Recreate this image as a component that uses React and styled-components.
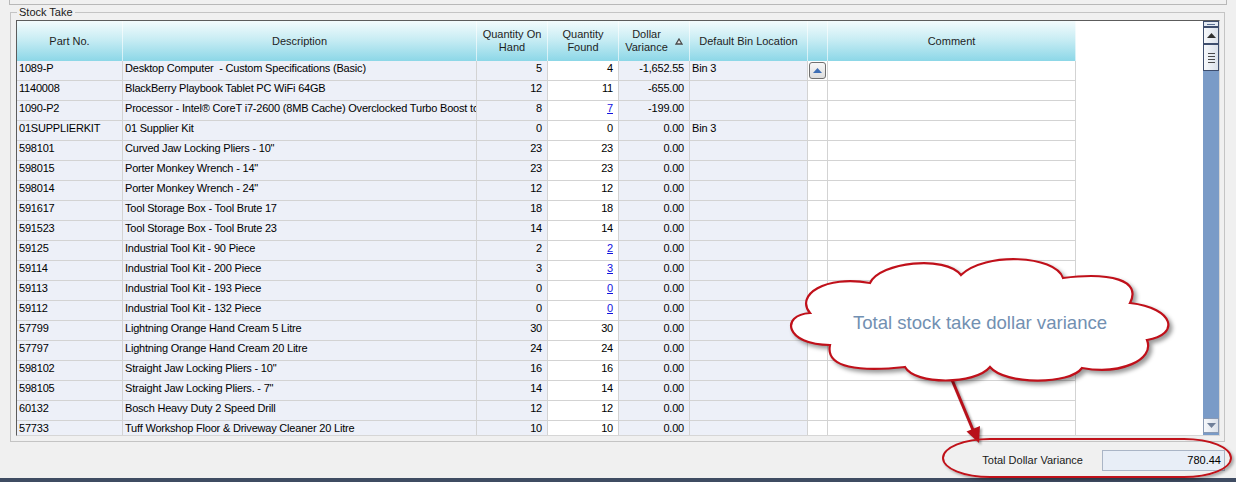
import React from 'react';
import styled, {createGlobalStyle} from 'styled-components';

const GlobalStyle = createGlobalStyle`
  html, body {
    margin: 0;
    padding: 0;
    background: #f0f0f0;
  }
`;

const Page = styled.div`
  position: relative;
  width: 1236px;
  height: 482px;
  overflow: hidden;
  background: #f0f0f0;
  display: flex;
  flex-direction: column;
  font: 11px "Liberation Sans", Arial, sans-serif;
  color: #000;
`;

const TopPanel = styled.div`
  box-sizing: border-box;
  height: 5px;
  margin: 0 9px;
  border: 1px solid #b8b8b8;
  border-top: none;
`;

const GroupBox = styled.fieldset`
  margin: 1px 11px 0 10px;
  padding: 1px 4px 5px 5px;
  border: 1px solid #c4c4c4;
  min-width: 0;
`;

const Legend = styled.legend`
  margin-left: 1px;
  padding: 0 2px;
  line-height: 13px;
  color: #1a1a1a;
`;

const Grid = styled.div`
  box-sizing: border-box;
  height: 416px;
  display: flex;
  border: 1px solid #d6d6d6;
  border-left-color: #5c5c5c;
  border-top-color: #5c5c5c;
`;

const Table = styled.div`
  flex: 1;
  background: #fff;
  overflow: hidden;
`;

const cols = '106px 354px 71px 71px 71px 118px 20px 248px';

const HeaderRow = styled.div`
  display: grid;
  grid-template-columns: ${cols};
  height: 40px;
`;

const HeadCell = styled.div`
  display: flex;
  align-items: center;
  justify-content: center;
  gap: 7px;
  text-align: center;
  line-height: 13px;
  color: #1e1e1e;
  background: linear-gradient(#f3fbfd 0%, #c9edf4 45%, #8cd7e7 100%);
  border-right: 1px solid rgba(255, 255, 255, 0.6);
`;

const Row = styled.div`
  display: grid;
  grid-template-columns: ${cols};
  height: 20px;
`;

const Cell = styled.div`
  box-sizing: border-box;
  padding: 0 ${p => (p.$right ? '5px' : '2px')} 0 2px;
  text-align: ${p => (p.$right ? 'right' : 'left')};
  line-height: 15px;
  letter-spacing: -0.2px;
  white-space: pre;
  overflow: hidden;
  background: ${p => (p.$ro ? '#edf0f8' : '#fff')};
  border-right: 1px solid #d3d3d3;
  border-bottom: 1px solid #d3d3d3;
`;

const Link = styled.span`
  color: #1111dd;
  text-decoration: underline;
`;

const UpButton = styled.div`
  box-sizing: border-box;
  width: 17px;
  height: 17px;
  margin: 1px 0 0 -1px;
  border: 1px solid #707070;
  border-radius: 3px;
  background: linear-gradient(#f7f7f7, #dedede);
  display: flex;
  align-items: center;
  justify-content: center;
`;

const ScrollBar = styled.div`
  width: 16px;
  display: flex;
  flex-direction: column;
  background: #7a9bc7;
`;

const Splitter = styled.div`
  box-sizing: border-box;
  height: 6px;
  border: 1px solid #3d4d6d;
  background: #e4eaf2;
  display: flex;
  align-items: center;
  justify-content: center;
  &::after {
    content: '';
    width: 8px;
    height: 1px;
    background: #5a6f92;
  }
`;

const ScrollBtn = styled.div`
  box-sizing: border-box;
  height: ${p => p.$h || 17}px;
  border: 1px solid ${p => (p.$dim ? '#8a9ab4' : '#3d4d6d')};
  background: linear-gradient(90deg, #f6f8fb, #dbe1ea);
  display: flex;
  flex-direction: column;
  align-items: center;
  justify-content: center;
  gap: 2px;
`;

const Grip = styled.span`
  width: 7px;
  height: 1px;
  background: #4a4a4a;
`;

const Track = styled.div`
  flex: ${p => p.$size ? `0 0 ${p.$size}px` : 1};
`;

const Footer = styled.div`
  height: 36px;
  display: flex;
  align-items: center;
  justify-content: flex-end;
  gap: 19px;
  padding-right: 11px;
`;

const Label = styled.span`
  color: #1a1a1a;
`;

const TotalBox = styled.div`
  box-sizing: border-box;
  width: 123px;
  height: 21px;
  padding-right: 3px;
  border: 1px solid #aab5c6;
  background: #e8eef7;
  text-align: right;
  line-height: 19px;
`;

const BottomBar = styled.div`
  height: 4px;
  background: #3f4c62;
`;

const Cloud = styled.div`
  position: absolute;
  left: 780px;
  top: 250px;
  width: 400px;
  height: 140px;
  display: flex;
  align-items: center;
  justify-content: center;
  padding-top: 6px;
  box-sizing: border-box;
  svg {
    position: absolute;
    inset: 0;
    filter: drop-shadow(3px 3px 2px rgba(0, 0, 0, 0.4));
  }
`;

const CloudText = styled.span`
  position: relative;
  font-size: 18.6px;
  color: #7290b2;
`;

const Arrow = styled.svg`
  position: absolute;
  left: 930px;
  top: 360px;
  filter: drop-shadow(2px 2px 1px rgba(0, 0, 0, 0.35));
`;

const Ring = styled.div`
  position: absolute;
  left: 942px;
  top: 438px;
  width: 290px;
  height: 40px;
  box-sizing: border-box;
  border: 2px solid #c0121a;
  border-radius: 48px / 20px;
  box-shadow: 2px 2px 3px rgba(0, 0, 0, 0.3);
`;

const rows = [
    ['1089-P', 'Desktop Computer  - Custom Specifications (Basic)', '5', '4', '-1,652.55', 'Bin 3', false, true],
    ['1140008', 'BlackBerry Playbook Tablet PC WiFi 64GB', '12', '11', '-655.00', ''],
    ['1090-P2', 'Processor - Intel® CoreT i7-2600 (8MB Cache) Overclocked Turbo Boost to 4.5GHz', '8', '7', '-199.00', '', true],
    ['01SUPPLIERKIT', '01 Supplier Kit', '0', '0', '0.00', 'Bin 3'],
    ['598101', 'Curved Jaw Locking Pliers - 10"', '23', '23', '0.00', ''],
    ['598015', 'Porter Monkey Wrench - 14"', '23', '23', '0.00', ''],
    ['598014', 'Porter Monkey Wrench - 24"', '12', '12', '0.00', ''],
    ['591617', 'Tool Storage Box - Tool Brute 17', '18', '18', '0.00', ''],
    ['591523', 'Tool Storage Box - Tool Brute 23', '14', '14', '0.00', ''],
    ['59125', 'Industrial Tool Kit - 90 Piece', '2', '2', '0.00', '', true],
    ['59114', 'Industrial Tool Kit - 200 Piece', '3', '3', '0.00', '', true],
    ['59113', 'Industrial Tool Kit - 193 Piece', '0', '0', '0.00', '', true],
    ['59112', 'Industrial Tool Kit - 132 Piece', '0', '0', '0.00', '', true],
    ['57799', 'Lightning Orange Hand Cream 5 Litre', '30', '30', '0.00', ''],
    ['57797', 'Lightning Orange Hand Cream 20 Litre', '24', '24', '0.00', ''],
    ['598102', 'Straight Jaw Locking Pliers - 10"', '16', '16', '0.00', ''],
    ['598105', 'Straight Jaw Locking Pliers. - 7"', '14', '14', '0.00', ''],
    ['60132', 'Bosch Heavy Duty 2 Speed Drill', '12', '12', '0.00', ''],
    ['57733', 'Tuff Workshop Floor & Driveway Cleaner 20 Litre', '10', '10', '0.00', ''],
];

const cloudPath =
    'M90 33 C100 12 165 5 181 25 C205 2 275 5 283 28 C330 22 362 30 350 53 ' +
    'C395 58 400 85 367 90 C375 110 340 125 302 118 C290 135 225 135 210 117 ' +
    'C195 135 135 135 125 117 C80 122 45 118 50 95 C5 95 0 65 30 63 C15 45 45 25 90 33 Z';

const App = () => {
    return (
        <Page>
            <GlobalStyle/>
            <TopPanel/>
            <GroupBox>
                <Legend>Stock Take</Legend>
                <Grid>
                    <Table>
                        <HeaderRow>
                            <HeadCell>Part No.</HeadCell>
                            <HeadCell>Description</HeadCell>
                            <HeadCell>Quantity On<br/>Hand</HeadCell>
                            <HeadCell>Quantity<br/>Found</HeadCell>
                            <HeadCell>
                                <span>Dollar<br/>Variance</span>
                                <svg width="8" height="7" viewBox="0 0 8 7">
                                    <polygon points="4,1 7,6 1,6" fill="#e6e6e6" stroke="#4a4a4a" strokeWidth="1.3"/>
                                </svg>
                            </HeadCell>
                            <HeadCell>Default Bin Location</HeadCell>
                            <HeadCell/>
                            <HeadCell>Comment</HeadCell>
                        </HeaderRow>
                        {rows.map(r => (
                            <Row key={r[0]}>
                                <Cell $ro>{r[0]}</Cell>
                                <Cell $ro>{r[1]}</Cell>
                                <Cell $ro $right>{r[2]}</Cell>
                                <Cell $right>{r[6] ? <Link>{r[3]}</Link> : r[3]}</Cell>
                                <Cell $ro $right>{r[4]}</Cell>
                                <Cell $ro>{r[5]}</Cell>
                                <Cell>
                                    {r[7] && (
                                        <UpButton>
                                            <svg width="9" height="5" viewBox="0 0 9 5">
                                                <polygon points="4.5,0 9,5 0,5" fill="#3f6fb5"/>
                                            </svg>
                                        </UpButton>
                                    )}
                                </Cell>
                                <Cell/>
                            </Row>
                        ))}
                    </Table>
                    <ScrollBar>
                        <Splitter/>
                        <ScrollBtn>
                            <svg width="9" height="5" viewBox="0 0 9 5">
                                <polygon points="4.5,0 9,5 0,5" fill="#2f2f2f"/>
                            </svg>
                        </ScrollBtn>
                        <ScrollBtn $h={27}>
                            <Grip/><Grip/><Grip/><Grip/>
                        </ScrollBtn>
                        <Track/>
                        <ScrollBtn $h={15} $dim>
                            <svg width="9" height="5" viewBox="0 0 9 5">
                                <polygon points="0,0 9,0 4.5,5" fill="#6f7f99"/>
                            </svg>
                        </ScrollBtn>
                        <Track $size={2}/>
                    </ScrollBar>
                </Grid>
            </GroupBox>
            <Footer>
                <Label>Total Dollar Variance</Label>
                <TotalBox>780.44</TotalBox>
            </Footer>
            <BottomBar/>

            <Arrow width="70" height="90" viewBox="0 0 70 90">
                <line x1="20" y1="15" x2="43" y2="70" stroke="#b8101a" strokeWidth="3"/>
                <polygon points="49,83 36.5,71.5 50,66" fill="#b8101a"/>
            </Arrow>
            <Cloud>
                <svg width="400" height="140" viewBox="0 0 400 140">
                    <path d={cloudPath} fill="#fff" stroke="#c0101a" strokeWidth="2.2"/>
                </svg>
                <CloudText>Total stock take dollar variance</CloudText>
            </Cloud>
            <Ring/>
        </Page>
    );
};

export default App;
